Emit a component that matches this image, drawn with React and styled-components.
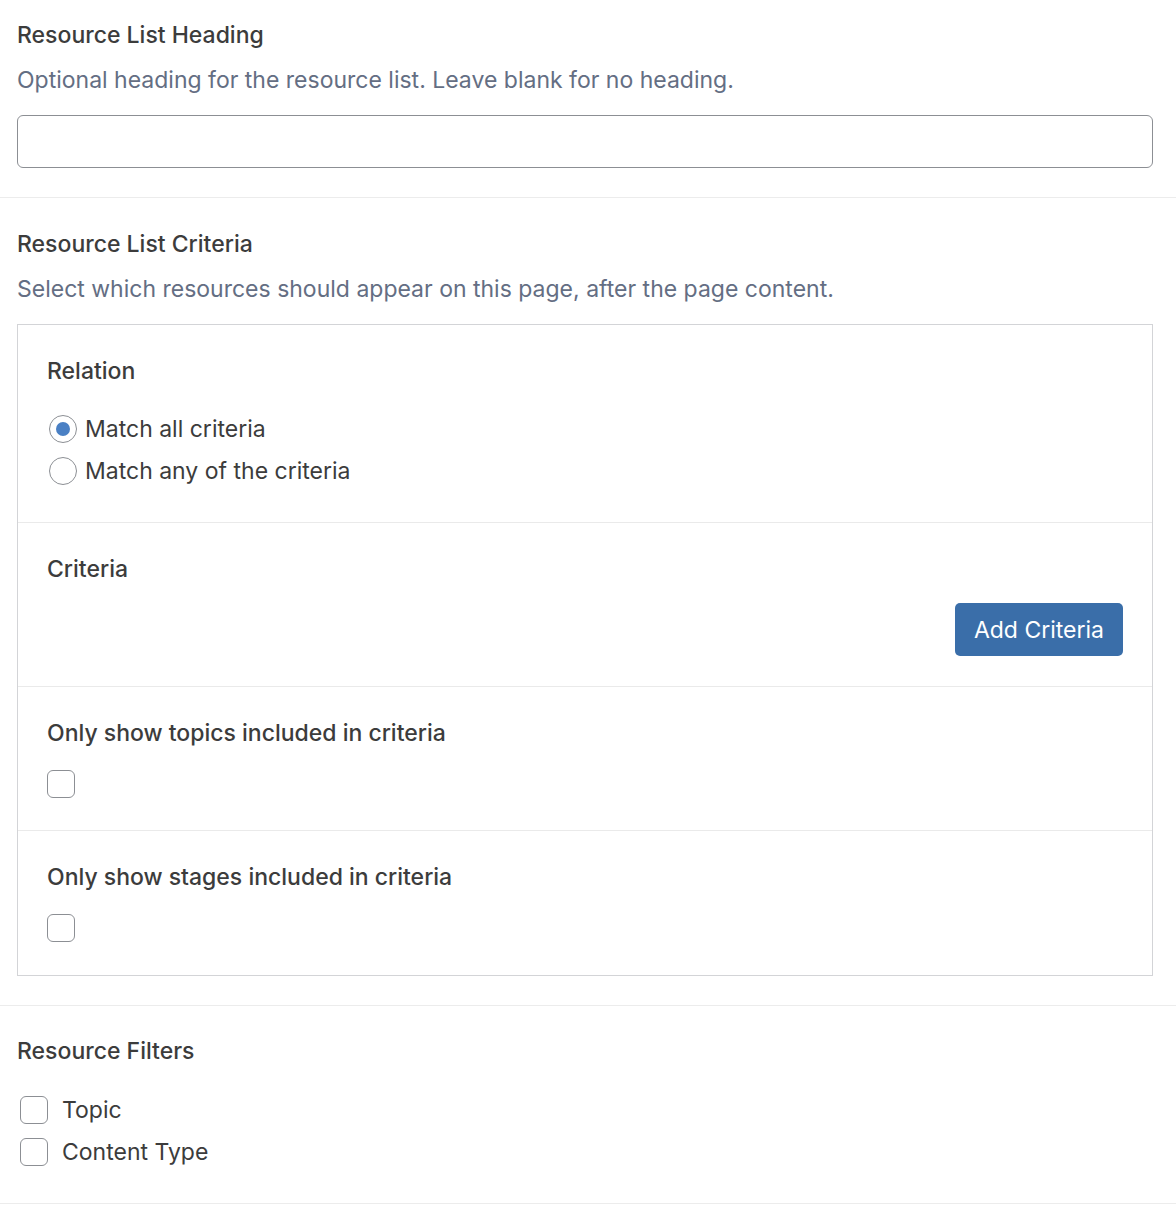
import React from 'react';
import styled, { createGlobalStyle } from 'styled-components';

const GlobalStyle = createGlobalStyle`
    body {
        margin: 0;
        background: #ffffff;
        font-family: Inter, "Noto Sans", "Liberation Sans", sans-serif;
        color: #3c434a;
    }
`;

const Page = styled.div`
    width: 1176px;
`;

const Section = styled.div`
    padding: ${props => props.top || 34}px 23px ${props => props.bottom || 29}px 17px;
    border-bottom: 1px solid #ececec;
`;

const Heading = styled.div`
    font-size: 23px;
    line-height: 24px;
    font-weight: 500;
    color: #3c3c3c;
`;

const Description = styled.div`
    margin-top: 21px;
    font-size: 23px;
    line-height: 24px;
    color: #646e83;
`;

const TextInput = styled.input`
    display: block;
    box-sizing: border-box;
    width: 100%;
    height: 53px;
    margin-top: 23px;
    border: 1px solid #8c8f94;
    border-radius: 6px;
    background: #fff;
    font: inherit;
    font-size: 23px;
    padding: 0 14px;
    outline: none;
`;

const Panel = styled.div`
    margin-top: 23px;
    border: 1px solid #d3d4d7;
`;

const PanelRow = styled.div`
    padding: 34px 29px ${props => props.bottom || 30}px 29px;
    & + & {
        border-top: 1px solid #eaeaea;
    }
`;

const FieldLabel = styled.div`
    font-size: 23px;
    line-height: 24px;
    font-weight: 500;
    color: #3c3c3c;
`;

const OptionList = styled.div`
    display: flex;
    flex-direction: column;
    margin-top: ${props => props.gap || 25}px;
`;

const Option = styled.label`
    display: flex;
    align-items: center;
    gap: ${props => props.gap || 8}px;
    height: 42px;
    font-size: 23px;
    color: #3c3c3c;
`;

const Radio = styled.span`
    box-sizing: border-box;
    width: 28px;
    height: 28px;
    margin-left: 2px;
    border-radius: 50%;
    border: 1px solid #8c8f94;
    background: #fff;
    display: flex;
    align-items: center;
    justify-content: center;
    &::after {
        content: '';
        width: 14px;
        height: 14px;
        border-radius: 50%;
        background: ${props => props.checked ? '#4a80c4' : 'transparent'};
    }
`;

const Checkbox = styled.span`
    box-sizing: border-box;
    display: block;
    width: 28px;
    height: 28px;
    margin-left: ${props => props.inset || 0}px;
    border: 1px solid #8c8f94;
    border-radius: 6px;
    background: #fff;
`;

const CheckboxSlot = styled.div`
    margin-top: 25px;
    height: 30px;
`;

const ButtonRow = styled.div`
    display: flex;
    justify-content: flex-end;
    margin-top: 22px;
`;

const Button = styled.button`
    height: 53px;
    padding: 0 19px;
    border: none;
    border-radius: 5px;
    background: #3a6ea9;
    color: #fff;
    font: inherit;
    font-size: 23px;
    cursor: pointer;
`;

export default function App() {
    return (
        <Page>
            <GlobalStyle />
            <Section top={23}>
                <Heading>Resource List Heading</Heading>
                <Description>Optional heading for the resource list. Leave blank for no heading.</Description>
                <TextInput type="text" />
            </Section>
            <Section>
                <Heading>Resource List Criteria</Heading>
                <Description>Select which resources should appear on this page, after the page content.</Description>
                <Panel>
                    <PanelRow>
                        <FieldLabel>Relation</FieldLabel>
                        <OptionList>
                            <Option><Radio checked />Match all criteria</Option>
                            <Option><Radio />Match any of the criteria</Option>
                        </OptionList>
                    </PanelRow>
                    <PanelRow>
                        <FieldLabel>Criteria</FieldLabel>
                        <ButtonRow>
                            <Button>Add Criteria</Button>
                        </ButtonRow>
                    </PanelRow>
                    <PanelRow>
                        <FieldLabel>Only show topics included in criteria</FieldLabel>
                        <CheckboxSlot><Checkbox /></CheckboxSlot>
                    </PanelRow>
                    <PanelRow bottom={31}>
                        <FieldLabel>Only show stages included in criteria</FieldLabel>
                        <CheckboxSlot><Checkbox /></CheckboxSlot>
                    </PanelRow>
                </Panel>
            </Section>
            <Section top={33} bottom={30}>
                <Heading>Resource Filters</Heading>
                <OptionList gap={26}>
                    <Option gap={14}><Checkbox inset={3} />Topic</Option>
                    <Option gap={14}><Checkbox inset={3} />Content Type</Option>
                </OptionList>
            </Section>
        </Page>
    );
}
